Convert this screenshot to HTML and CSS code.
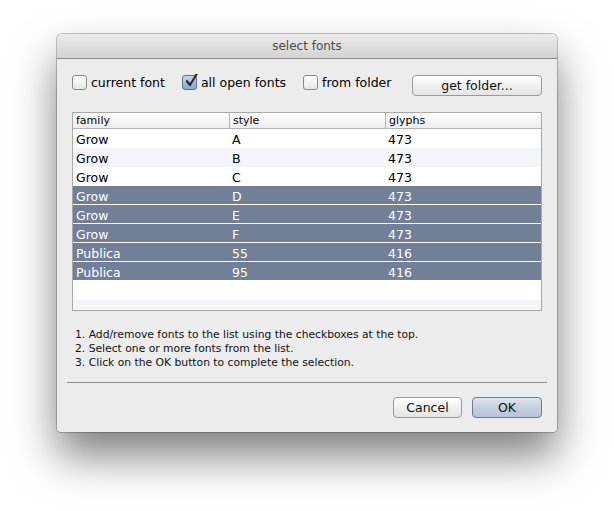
FILE: index.html
```html
<!DOCTYPE html>
<html>
<head>
<meta charset="utf-8">
<link rel="stylesheet" href="styles.css">
</head>
<body>
<div class="stage">
  <div class="window">
    <div class="titlebar">select fonts</div>
    <div class="content">
      <div class="options">
        <label class="check"><span class="box"></span>current font</label>
        <label class="check"><span class="box checked"><svg width="14" height="14" viewBox="0 0 14 14"><path d="M3 7.2 L6 11 L12.5 0.5" fill="none" stroke="#2b2b2b" stroke-width="2.2" stroke-linecap="round" stroke-linejoin="round"/></svg></span>all open fonts</label>
        <label class="check"><span class="box"></span>from folder</label>
        <button class="btn folder">get folder...</button>
      </div>
      <div class="table">
        <div class="thead">
          <div class="c1">family</div><div class="c2">style</div><div class="c3">glyphs</div>
        </div>
        <div class="row"><div class="c1">Grow</div><div class="c2">A</div><div class="c3">473</div></div>
        <div class="row alt"><div class="c1">Grow</div><div class="c2">B</div><div class="c3">473</div></div>
        <div class="row"><div class="c1">Grow</div><div class="c2">C</div><div class="c3">473</div></div>
        <div class="row sel"><div class="c1">Grow</div><div class="c2">D</div><div class="c3">473</div></div>
        <div class="row sel"><div class="c1">Grow</div><div class="c2">E</div><div class="c3">473</div></div>
        <div class="row sel"><div class="c1">Grow</div><div class="c2">F</div><div class="c3">473</div></div>
        <div class="row sel"><div class="c1">Publica</div><div class="c2">55</div><div class="c3">416</div></div>
        <div class="row sel"><div class="c1">Publica</div><div class="c2">95</div><div class="c3">416</div></div>
        <div class="row empty"></div>
        <div class="row alt empty"></div>
      </div>
      <div class="help">
        <div>1. Add/remove fonts to the list using the checkboxes at the top.</div>
        <div>2. Select one or more fonts from the list.</div>
        <div>3. Click on the OK button to complete the selection.</div>
      </div>
      <div class="sep"></div>
      <div class="actions">
        <button class="btn cancel">Cancel</button>
        <button class="btn ok">OK</button>
      </div>
    </div>
  </div>
</div>
</body>
</html>
```
FILE: styles.css
```css
html, body {
  margin: 0;
  padding: 0;
  background: #ffffff;
}
body {
  width: 614px;
  height: 511px;
  overflow: hidden;
  font-family: "DejaVu Sans", "Noto Sans", sans-serif;
  color: #000;
}
.stage {
  padding: 34px 0 0 57px;
}
.window {
  width: 500px;
  height: 398px;
  border-radius: 5px 5px 4px 4px;
  background: #ececec;
  box-shadow: 0 0 0 1px rgba(0,0,0,0.22), 0 24px 44px rgba(0,0,0,0.5);
  display: flex;
  flex-direction: column;
  overflow: hidden;
}
.titlebar {
  height: 24px;
  line-height: 24px;
  text-align: center;
  font-size: 12px;
  color: #4a4a4a;
  background: linear-gradient(#ececec, #d2d2d2);
  border-bottom: 1px solid #8a8a8a;
  border-radius: 5px 5px 0 0;
}
.content {
  flex: 1;
  padding: 15px 15px 0 15px;
  display: flex;
  flex-direction: column;
}
.options {
  display: flex;
  align-items: flex-start;
  height: 22px;
  font-size: 12.5px;
}
.check {
  display: flex;
  align-items: center;
  margin-right: 17px;
  height: 16px;
}
.box {
  width: 13px;
  height: 13px;
  border: 1px solid #8a8a8a;
  border-radius: 3px;
  background: linear-gradient(#ffffff, #e6e6e6);
  margin-right: 4px;
  position: relative;
  box-sizing: content-box;
}
.box.checked {
  background: linear-gradient(#c7d3e6, #8ea7cc);
  border-color: #5d6f8d;
}
.box svg {
  position: absolute;
  left: 1px;
  top: -2px;
}
.btn {
  font-family: "DejaVu Sans", "Noto Sans", sans-serif;
  font-size: 12.5px;
  color: #111;
  height: 21px;
  border: 1px solid #9a9a9a;
  border-radius: 4px;
  background: linear-gradient(#ffffff, #f0f0f0 50%, #e4e4e4);
  padding: 0;
}
.folder {
  margin-left: auto;
  width: 130px;
  margin-top: 1px;
}
.table {
  margin-top: 16px;
  width: 470px;
  height: 199px;
  border: 1px solid #a9a9a9;
  box-sizing: border-box;
  background: #fff;
  overflow: hidden;
}
.thead {
  display: flex;
  height: 15px;
  line-height: 15px;
  font-size: 11px;
  background: linear-gradient(#ffffff, #ececec);
  border-bottom: 1px solid #b4b4b4;
}
.c1, .c2, .c3 {
  box-sizing: border-box;
  padding-left: 3px;
  white-space: nowrap;
}
.c1 { width: 156px; }
.c2 { width: 156px; }
.c3 { flex: 1; }
.thead .c2, .thead .c3 {
  border-left: 1px solid #b4b4b4;
  padding-left: 3px;
}
.row .c2 { padding-left: 3px; }
.row .c3 { padding-left: 3px; }
.row {
  display: flex;
  height: 19px;
  box-sizing: border-box;
  padding-top: 3px;
  line-height: 16px;
  font-size: 12.5px;
  background: #fff;
}
.row.alt { background: #f3f5f8; }
.row.sel {
  background: #717f97;
  color: #ffffff;
  border-bottom: 1px solid #fff;
}
.help {
  margin-top: 17px;
  font-size: 10.75px;
  line-height: 14px;
  padding-left: 3px;
  color: #111;
}
.sep {
  margin: 12px -5px 0 -5px;
  height: 1px;
  background: #8f8f8f;
}
.actions {
  display: flex;
  justify-content: flex-end;
  gap: 10px;
  margin-top: 14px;
}
.cancel { width: 69px; }
.ok {
  width: 70px;
  background: linear-gradient(#dfe5ee, #c4cfdf 50%, #b8c4d6);
  border-color: #6c7a92;
}
```
